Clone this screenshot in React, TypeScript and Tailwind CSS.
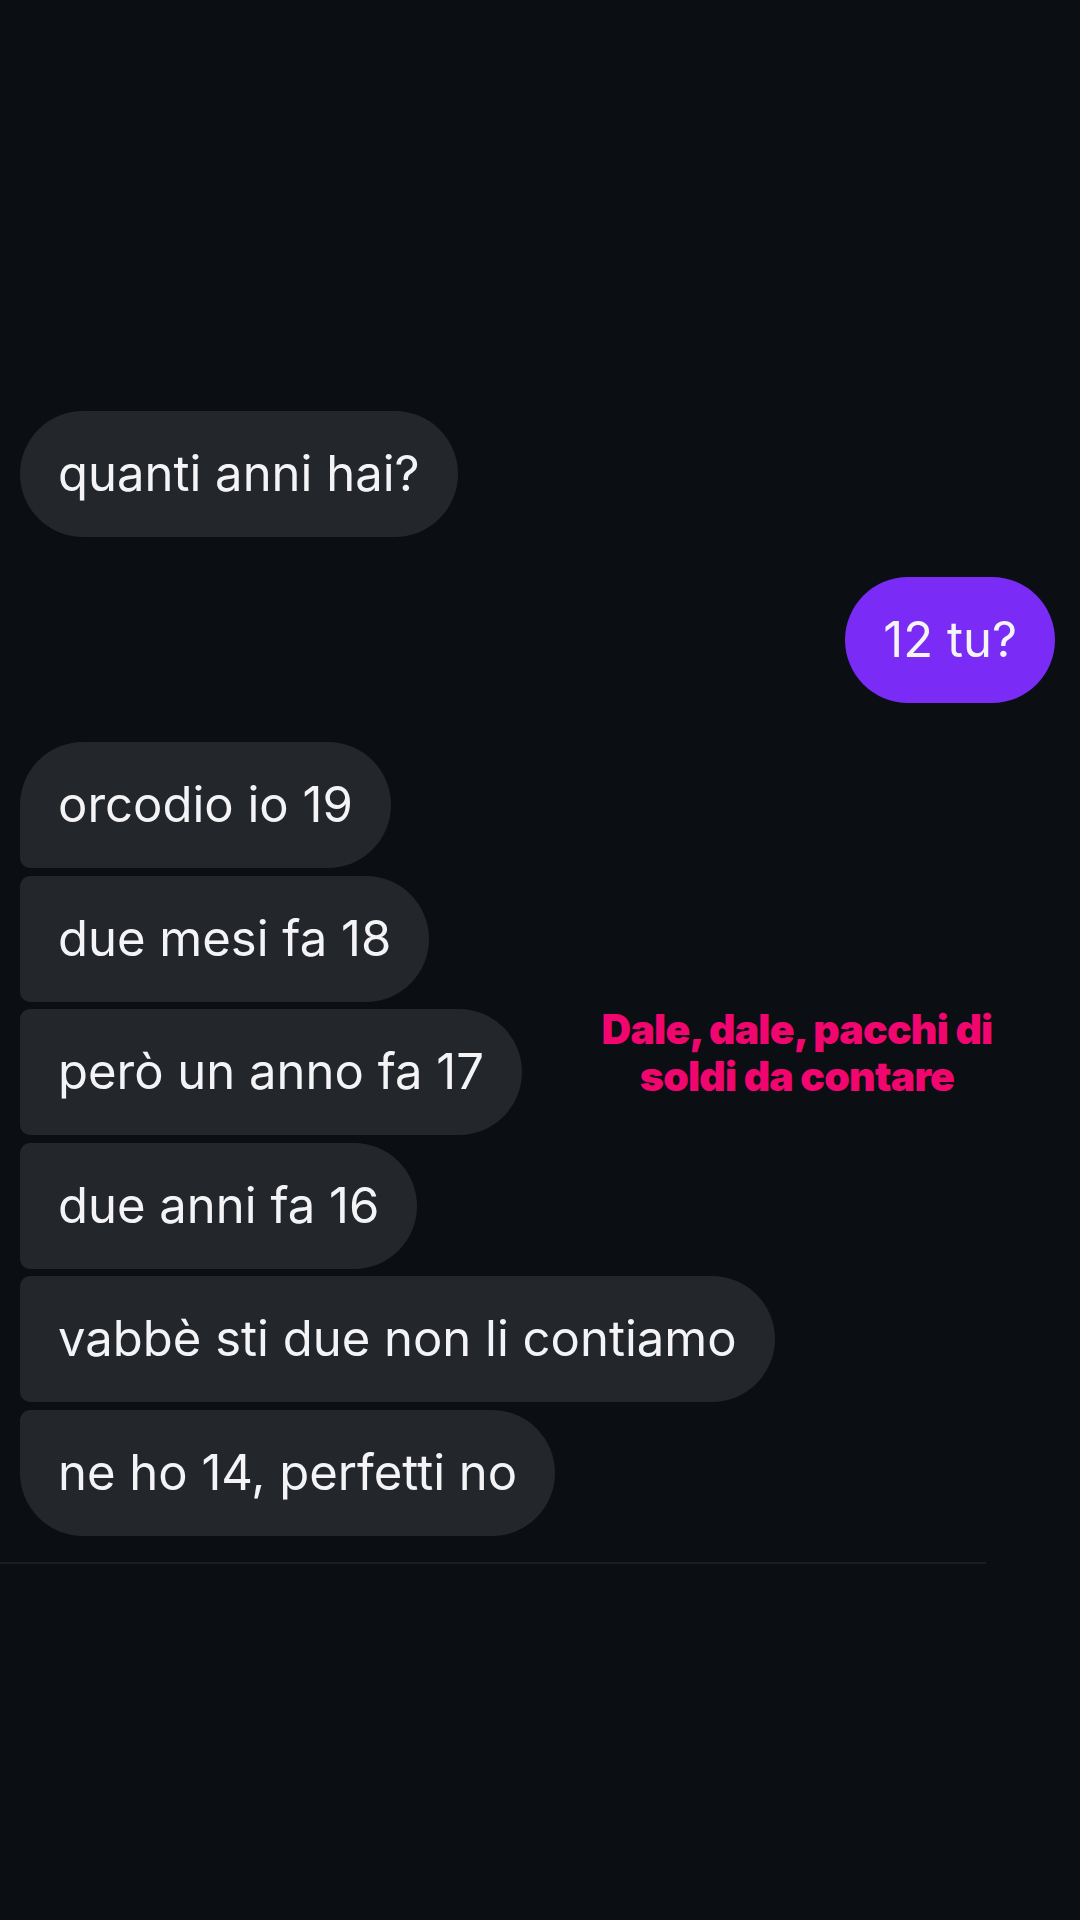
import React from 'react';

interface Msg {
  id: number;
  text: string;
  mine?: boolean;
  shape: string;
}

const App: React.FC = () => {
  const first: Msg = { id: 1, text: 'quanti anni hai?', shape: 'rounded-[63px]' };
  const reply: Msg = { id: 2, text: '12 tu?', mine: true, shape: 'rounded-[63px]' };

  // gruppo di messaggi consecutivi: angoli sinistri piccoli in mezzo
  const group: Msg[] = [
    { id: 3, text: 'orcodio io 19', shape: 'rounded-[63px] rounded-bl-[10px]' },
    { id: 4, text: 'due mesi fa 18', shape: 'rounded-[63px] rounded-l-[10px]' },
    { id: 5, text: 'però un anno fa 17', shape: 'rounded-[63px] rounded-l-[10px]' },
    { id: 6, text: 'due anni fa 16', shape: 'rounded-[63px] rounded-l-[10px]' },
    { id: 7, text: 'vabbè sti due non li contiamo', shape: 'rounded-[63px] rounded-l-[10px]' },
    { id: 8, text: 'ne ho 14, perfetti no', shape: 'rounded-[63px] rounded-tl-[10px]' }
  ];

  const Bubble = ({ msg }: { msg: Msg }) => (
    <div
      className={`h-[126px] flex items-center px-[38px] text-[49px] text-[#f4f4f6] whitespace-nowrap ${msg.shape} ${
        msg.mine ? 'bg-[#7a2bf5]' : 'bg-[#23272c]'
      }`}
    >
      {msg.text}
    </div>
  );

  return (
    <div
      className="relative w-[1080px] h-[1920px] bg-[#0b0f14] overflow-hidden"
      style={{ fontFamily: 'Inter, "Noto Sans", sans-serif' }}
    >
      <div className="flex flex-col pt-[411px] pl-[20px] pr-[25px]">
        <div className="flex">
          <Bubble msg={first} />
        </div>

        <div className="flex justify-end mt-[40px]">
          <Bubble msg={reply} />
        </div>

        <div className="flex flex-col items-start gap-[7.5px] mt-[39px]">
          {group.map((m) => (
            <Bubble key={m.id} msg={m} />
          ))}
        </div>
      </div>

      <div className="mt-[26px] w-[986px] h-[2px] bg-[#1a1e23]" />

      {/* sticker testo della storia */}
      <div className="absolute top-[1006px] left-[567px] w-[460px] text-center text-[41px] leading-[47px] font-black tracking-[-0.8px] whitespace-nowrap text-[#f0066e]">
        Dale, dale, pacchi di
        <br />
        soldi da contare
      </div>
    </div>
  );
};

export default App;
